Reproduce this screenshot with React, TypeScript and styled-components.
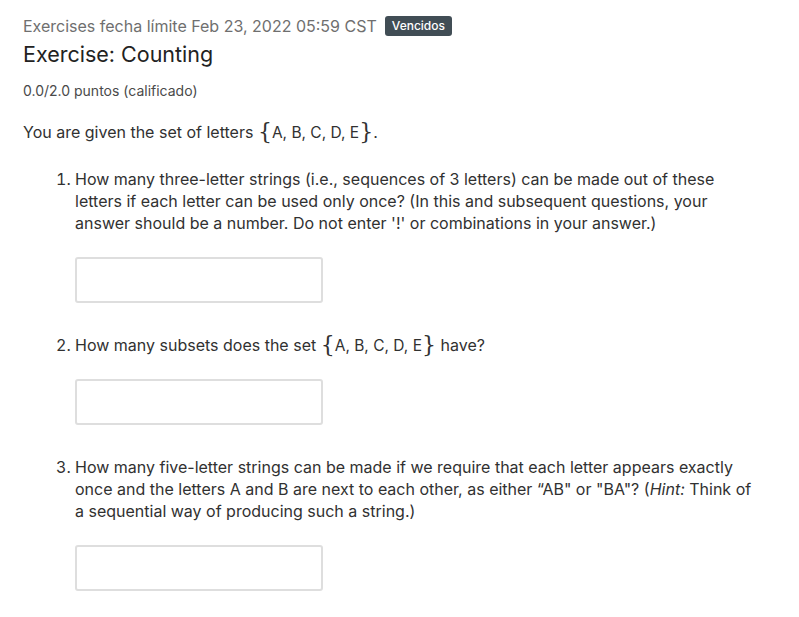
import React from 'react';
import styled, { createGlobalStyle } from 'styled-components';

const GlobalStyle = createGlobalStyle`
	body {
		margin: 0;
		background: #fff;
		font-family: Inter, 'Open Sans', sans-serif;
		color: #313131;
	}
`;

const Page = styled.div`
	padding: 14px 23px 0 23px;
	width: 740px;
`;

const HeaderRow = styled.div`
	display: flex;
	align-items: center;
	gap: 8px;
	height: 24px;
`;

const Deadline = styled.span`
	font-size: 16px;
	color: #6f6f6f;
`;

const Badge = styled.span`
	background: #414d55;
	color: #fff;
	font-size: 12px;
	font-weight: 500;
	border-radius: 3px;
	padding: 3px 7px;
	line-height: 14px;
`;

const Title = styled.h2`
	margin: 1px 0 0 0;
	font-size: 21.5px;
	font-weight: 400;
	line-height: 30px;
	color: #222;
`;

const Score = styled.div`
	margin-top: 13px;
	font-size: 14px;
	color: #4a4a4a;
	line-height: 18px;
`;

const Intro = styled.p`
	margin: 21px 0 0 0;
	font-size: 16px;
	line-height: 22px;
`;

const SetBrace = styled.span`
	font-family: 'DejaVu Serif', serif;
	font-size: 22px;
	line-height: 0;
	vertical-align: -1px;
`;

const SetBody = styled.span`
	font-size: 15.5px;
`;

const Questions = styled.ol`
	margin: 24px 0 0 0;
	padding-left: 52px;
	width: 681px;
	font-size: 16px;
	line-height: 22px;
`;

const Question = styled.li`
	margin-bottom: 31px;
`;

const AnswerBox = styled.input<{ $gap: number }>`
	display: block;
	box-sizing: border-box;
	width: 248px;
	height: 46px;
	margin-top: ${(p) => p.$gap}px;
	border: 2px solid #dedede;
	border-radius: 3px;
	background: #fff;
`;

const SetOf = () => (
	<>
		<SetBrace>{'{'}</SetBrace>
		<SetBody>A, B, C, D, E</SetBody>
		<SetBrace>{'}'}</SetBrace>
	</>
);

export default function App() {
	return (
		<Page>
			<GlobalStyle />
			<HeaderRow>
				<Deadline>Exercises fecha límite Feb 23, 2022 05:59 CST</Deadline>
				<Badge>Vencidos</Badge>
			</HeaderRow>
			<Title>Exercise: Counting</Title>
			<Score>0.0/2.0 puntos (calificado)</Score>
			<Intro>
				You are given the set of letters <SetOf />.
			</Intro>
			<Questions>
				<Question>
					How many three-letter strings (i.e., sequences of 3 letters) can be made out of these letters if each
					letter can be used only once? (In this and subsequent questions, your answer should be a number. Do not
					enter '!' or combinations in your answer.)
					<AnswerBox $gap={23} type="text" />
				</Question>
				<Question>
					How many subsets does the set <SetOf /> have?
					<AnswerBox $gap={22} type="text" />
				</Question>
				<Question>
					How many five-letter strings can be made if we require that each letter appears exactly once and the
					letters A and B are next to each other, as either “AB" or "BA"? (<i>Hint:</i> Think of a sequential way
					of producing such a string.)
					<AnswerBox $gap={23} type="text" />
				</Question>
			</Questions>
		</Page>
	);
}
